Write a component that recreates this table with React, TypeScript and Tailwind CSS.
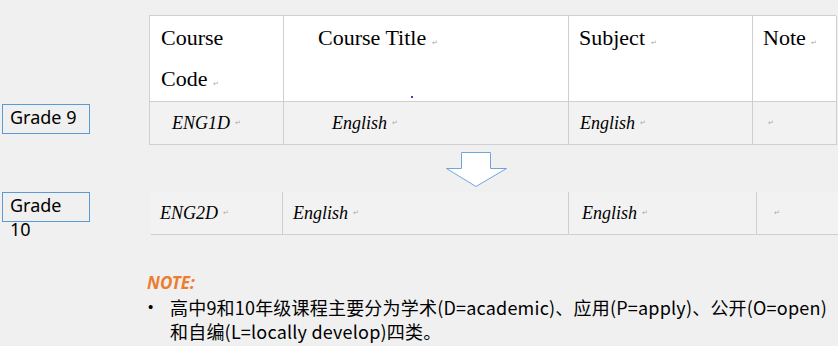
import React from "react";

const serif = { fontFamily: '"Liberation Serif", "Times New Roman", serif' };
const sans = { fontFamily: '"Noto Sans", "Noto Sans CJK SC", sans-serif' };
const cjk = { fontFamily: '"Noto Sans CJK SC", "Noto Sans", sans-serif' };

function Mark({ className = "" }: { className?: string }) {
  return <span className={`text-[7px] text-[#a8a8a8] not-italic ${className}`}>↵</span>;
}

function GradeLabel({ children }: { children: React.ReactNode }) {
  return (
    <div
      style={sans}
      className="w-[88px] h-[30px] border border-[#5b9bd5] pl-[7px] pr-[10px] text-[18px] leading-[24px] text-black"
    >
      {children}
    </div>
  );
}

export default function App() {
  return (
    <div className="w-[838px] h-[346px] overflow-hidden bg-[#f0f0f0]">
      {/* first table: grade 9 */}
      <div className="flex pt-[15px]">
        <div className="w-[149px] shrink-0 pl-[2px] pt-[89px]">
          <GradeLabel>Grade 9</GradeLabel>
        </div>
        <div
          style={serif}
          className="grid w-[687px] grid-cols-[134px_285px_184px_84px] grid-rows-[86px_43px] border-t border-l border-[#cfcfcf] text-black"
        >
          <div className="border-r border-b border-[#cfcfcf] bg-white pl-[11px] pt-[1px] text-[22px] leading-[41px]">
            Course
            <br />
            Code <Mark />
          </div>
          <div className="relative border-r border-b border-[#cfcfcf] bg-white pl-[34px] pt-[1px] text-[22px] leading-[41px]">
            Course Title <Mark />
            <span className="absolute left-[127px] top-[80px] h-[2px] w-[2px] bg-[#3b3bd8]" />
          </div>
          <div className="border-r border-b border-[#cfcfcf] bg-white pl-[10px] pt-[1px] text-[22px] leading-[41px]">
            Subject <Mark />
          </div>
          <div className="border-r border-b border-[#cfcfcf] bg-white pl-[10px] pt-[1px] text-[22px] leading-[41px]">
            Note <Mark />
          </div>
          <div className="flex items-center border-r border-b border-[#cfcfcf] bg-[#f2f2f2] pl-[22px] text-[18px] italic">
            ENG1D&nbsp;<Mark />
          </div>
          <div className="flex items-center border-r border-b border-[#cfcfcf] bg-[#f2f2f2] pl-[48px] text-[18px] italic">
            English&nbsp;<Mark />
          </div>
          <div className="flex items-center border-r border-b border-[#cfcfcf] bg-[#f2f2f2] pl-[11px] text-[18px] italic">
            English&nbsp;<Mark />
          </div>
          <div className="flex items-center border-r border-b border-[#cfcfcf] bg-[#f2f2f2] pl-[15px] text-[18px] italic">
            <Mark />
          </div>
        </div>
      </div>

      {/* arrow */}
      <div className="pl-[445px] pt-[6px]">
        <svg width="63" height="37" viewBox="0 0 63 37">
          <path
            d="M16.5 1.5 H45.5 V17.5 H61.5 L31 35.5 L1.5 17.5 H16.5 Z"
            fill="#ffffff"
            stroke="#6fa6dc"
            strokeWidth="1"
          />
        </svg>
      </div>

      {/* second table: grade 10 */}
      <div className="mt-[4px] flex">
        <div className="w-[151px] shrink-0 pl-[2px]">
          <GradeLabel>Grade 10</GradeLabel>
        </div>
        <div
          style={serif}
          className="grid h-[43px] w-[687px] grid-cols-[132px_286px_188px_81px] border-b border-[#cfcfcf] bg-[#f2f2f2] text-[18px] italic text-black"
        >
          <div className="flex items-center border-r border-[#cfcfcf] pl-[9px]">
            ENG2D&nbsp;<Mark />
          </div>
          <div className="flex items-center border-r border-[#cfcfcf] pl-[10px]">
            English&nbsp;<Mark />
          </div>
          <div className="flex items-center border-r border-[#cfcfcf] pl-[13px]">
            English&nbsp;<Mark />
          </div>
          <div className="flex items-center pl-[17px]">
            <Mark />
          </div>
        </div>
      </div>

      {/* note */}
      <div className="mt-[38px] pl-[147px]">
        <div style={sans} className="text-[17px] leading-[20px] font-bold italic text-[#ed7d31]">
          NOTE:
        </div>
        <div className="flex pt-[2px] text-[18px] leading-[24px] text-black">
          <span
            style={{ fontFamily: '"Liberation Sans", Arial, sans-serif' }}
            className="w-[23px] shrink-0 pl-[1px] text-[15px]"
          >
            •
          </span>
          <p style={cjk} className="w-[668px] tracking-[0.2px] whitespace-nowrap">
            高中9和10年级课程主要分为学术(D=academic)、应用(P=apply)、公开(O=open)
            <br />
            和自编(L=locally develop)四类。
          </p>
        </div>
      </div>
    </div>
  );
}
